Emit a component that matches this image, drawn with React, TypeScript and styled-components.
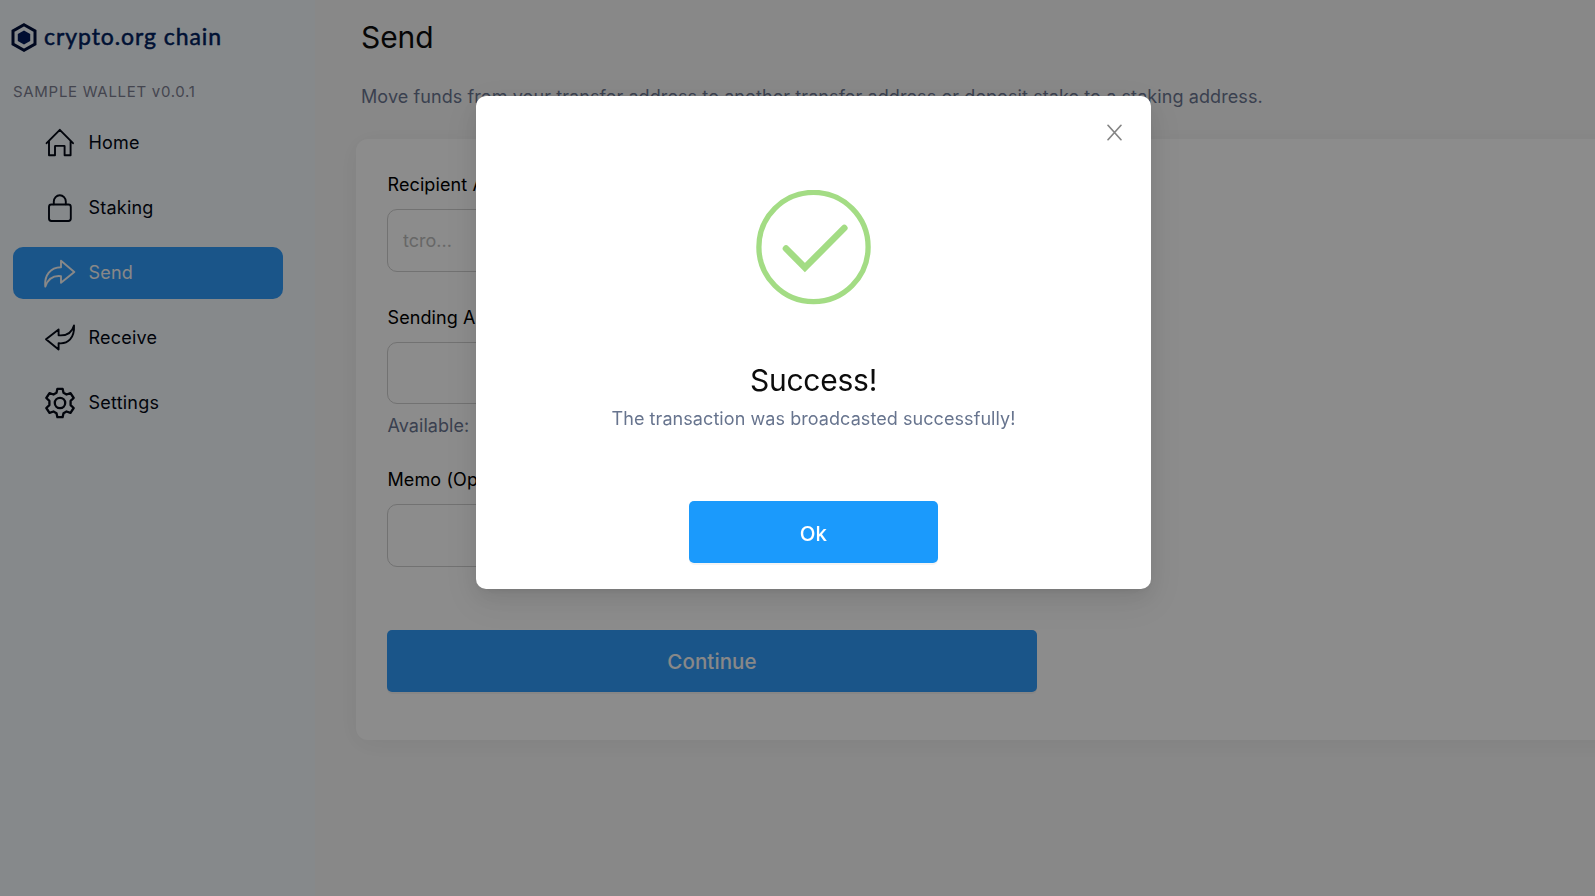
import React from 'react';
import styled, { createGlobalStyle } from 'styled-components';

const GlobalStyle = createGlobalStyle`
  * { box-sizing: border-box; }
  body {
    margin: 0;
    overflow: hidden;
    background: #f8f8f8;
    font-family: Inter, "Liberation Sans", sans-serif;
  }
  button, input { font-family: inherit; }
`;

const Layout = styled.div`
  display: flex;
  width: 100vw;
  height: 100vh;
  overflow: hidden;
`;

const Sidebar = styled.aside`
  flex: 0 0 315px;
  background: #f4f9fd;
`;

const Logo = styled.div`
  display: flex;
  align-items: center;
  gap: 7px;
  height: 74px;
  padding-left: 11px;
  color: #00225f;
`;

const LogoText = styled.span`
  font: 400 23px/30px Lato, "Open Sans", sans-serif;
  letter-spacing: 0.92px;
  padding-bottom: 2px;
  -webkit-text-stroke: 0.5px currentColor;
  white-space: nowrap;
`;

const Version = styled.div`
  padding-left: 13px;
  font-size: 15px;
  line-height: 36px;
  letter-spacing: 0.7px;
  color: #7d7f91;
`;

const Menu = styled.nav`
  display: flex;
  flex-direction: column;
  gap: 13px;
  padding: 7px 32px 0 13px;
`;

const MenuItem = styled.a<{ $active?: boolean }>`
  display: flex;
  align-items: center;
  gap: 12.5px;
  height: 52px;
  padding-left: 31px;
  border-radius: 10px;
  font-size: 18px;
  letter-spacing: 0.22px;
  color: ${(p) => (p.$active ? '#f7f7f7' : '#020814')};
  background: ${(p) => (p.$active ? '#319bf9' : 'transparent')};
`;

const MenuLabel = styled.span`
  padding-bottom: 1px;
`;

const Main = styled.main`
  flex: 1 0 auto;
  width: 1320px;
`;

const Title = styled.h1`
  margin: 0;
  padding-left: 46px;
  font-size: 30px;
  font-weight: 400;
  line-height: 75px;
  letter-spacing: -0.1px;
  color: #0c0c0c;
`;

const Description = styled.p`
  margin: 0 0 21px;
  padding-left: 46px;
  font-size: 18px;
  line-height: 43px;
  letter-spacing: 0.09px;
  color: #6b7691;
`;

const Card = styled.section`
  margin-left: 41px;
  padding: 32px 31px 48px;
  border-radius: 12px;
  background: #fff;
  box-shadow: 0 4px 26px rgba(0, 0, 0, 0.05);
`;

const Form = styled.form`
  display: flex;
  flex-direction: column;
  width: 650px;
`;

const Field = styled.div<{ $gap: number }>`
  display: flex;
  flex-direction: column;
  margin-bottom: ${(p) => p.$gap}px;
`;

const Label = styled.label`
  margin-bottom: 10px;
  padding-left: 0.5px;
  font-size: 18px;
  line-height: 28px;
  letter-spacing: 0.1px;
  color: #000;
`;

const Input = styled.input`
  height: 62.5px;
  padding: 0 15px;
  border: 1px solid #cfcfcf;
  border-radius: 10px;
  background: #fff;
  font-size: 18px;
  outline: none;
  &::placeholder { color: #bcbcbc; }
`;

const Hint = styled.div`
  margin-top: 7.5px;
  padding-left: 0.5px;
  font-size: 18px;
  line-height: 28px;
  letter-spacing: 0.05px;
  color: #6b7691;
`;

const Button = styled.button<{ $muted?: boolean }>`
  height: 62px;
  padding: 2px 0 0;
  border: 0;
  border-radius: 5px;
  font-size: 20.5px;
  font-weight: 500;
  letter-spacing: 0.1px;
  color: ${(p) => (p.$muted ? '#f7f7f7' : '#fff')};
  background: ${(p) => (p.$muted ? '#319bf9' : '#1b9afc')};
  box-shadow: 0 2px 0 rgba(0, 0, 0, 0.045);
`;

const Mask = styled.div`
  position: fixed;
  inset: 0;
  display: flex;
  justify-content: center;
  align-items: flex-start;
  padding: 96px 0 0 32px;
  background: rgba(0, 0, 0, 0.45);
`;

const Modal = styled.div`
  position: relative;
  display: flex;
  flex-direction: column;
  align-items: center;
  width: 675px;
  height: 493px;
  padding-top: 94px;
  border-radius: 10px;
  background: #fff;
  box-shadow: 0 4px 8px -5px rgba(0, 0, 0, 0.12), 0 8px 21px rgba(0, 0, 0, 0.08),
    0 12px 36px 10px rgba(0, 0, 0, 0.05);
`;

const Close = styled.span`
  position: absolute;
  top: 28px;
  right: 28px;
  display: flex;
`;

const ModalTitle = styled.h2`
  margin: 55px 0 0;
  font-size: 30px;
  font-weight: 400;
  line-height: 40px;
  letter-spacing: -0.25px;
  color: #0c0c0c;
`;

const ModalText = styled.p`
  margin: 5px 0 68px;
  font-size: 18px;
  line-height: 28px;
  letter-spacing: 0.07px;
  color: #67748e;
`;

const OkButton = styled(Button)`
  width: 249px;
`;

const Icon = ({ children }: { children: React.ReactNode }) => (
  <svg width="32" height="32" viewBox="0 0 32 32" fill="none" stroke="currentColor" strokeWidth="1.9" strokeLinejoin="round" strokeLinecap="round">
    {children}
  </svg>
);

const HomeIcon = () => (
  <Icon>
    <path d="M2.6 16.2 15.8 2.8 29 16.2M5 14.2V28.3H11V19.2Q11 18.9 11.3 18.9H20.3Q20.6 18.9 20.6 19.2V28.3H26.6V14.2" />
  </Icon>
);
const LockIcon = () => (
  <Icon>
    <rect x="5" y="12.5" width="21.8" height="16.500" rx="2.4" />
    <path d="M9.8 12.3V9.5a6 6.3 0 0 1 12 0v2.8" />
  </Icon>
);
const SendIcon = () => (
  <Icon>
    <path d="M17 3.8 30.3 15 17 25.8V19.2C10 18.4 4.3 21.2 1.3 29.6C.2 19 6 10.2 17 10.2Z" />
  </Icon>
);
const ReceiveIcon = () => (
  <Icon>
    <path d="M14.6 7.4 2 17.2 14.6 27.5V21.2C24 22.3 30.7 16 30 3.4C28 10.7 22.5 13.9 14.6 13.3Z" />
  </Icon>
);
const GearIcon = () => (
  <svg width="32" height="32" viewBox="0 0 32 32" fill="none" stroke="currentColor" strokeWidth="2.3" strokeLinejoin="round">
    <path d="M13.400 1.800h5.200l.9 4 3 1.700 4-1.400 3.200 4.900-3.100 2.900v4.200l3.100 2.900-3.200 4.900-4-1.400-3 1.700-.9 4h-5.200l-.9-4-3-1.700-4 1.400L2.300 21l3.100-2.900v-4.200L2.300 11l3.200-4.900 4 1.400 3-1.700z" />
    <circle cx="16" cy="16" r="5.2" />
  </svg>
);

const menu = [
  { label: 'Home', icon: <HomeIcon /> },
  { label: 'Staking', icon: <LockIcon /> },
  { label: 'Send', icon: <SendIcon />, active: true },
  { label: 'Receive', icon: <ReceiveIcon /> },
  { label: 'Settings', icon: <GearIcon /> },
];

export default function App() {
  return (
    <>
      <GlobalStyle />
      <Layout>
        <Sidebar>
          <Logo>
            <svg width="26" height="29" viewBox="0 0 26 29">
              <path d="M13 1.800 24 8V21L13 27.200 2 21V8Z" fill="none" stroke="#000f3a" strokeWidth="3" />
              <path d="M13 7.500 19.200 11V18L13 21.500 6.800 18V11Z" fill="#00195a" />
            </svg>
            <LogoText>crypto.org chain</LogoText>
          </Logo>
          <Version>SAMPLE WALLET v0.0.1</Version>
          <Menu>
            {menu.map((m) => (
              <MenuItem key={m.label} $active={m.active}>
                {m.icon}
                <MenuLabel>{m.label}</MenuLabel>
              </MenuItem>
            ))}
          </Menu>
        </Sidebar>
        <Main>
          <Title>Send</Title>
          <Description>
            Move funds from your transfer address to another transfer address or deposit stake to a staking address.
          </Description>
          <Card>
            <Form>
              <Field $gap={32}>
                <Label>Recipient Address</Label>
                <Input placeholder="tcro..." />
              </Field>
              <Field $gap={26.5}>
                <Label>Sending Amount</Label>
                <Input />
                <Hint>Available:</Hint>
              </Field>
              <Field $gap={63}>
                <Label>Memo (Optional)</Label>
                <Input />
              </Field>
              <Button type="button" $muted>Continue</Button>
            </Form>
          </Card>
        </Main>
      </Layout>
      <Mask>
        <Modal>
          <Close>
            <svg width="17" height="17" viewBox="0 0 17 17" stroke="#858585" strokeWidth="1.7" strokeLinecap="round">
              <path d="M2 1.300 15 15.700M15 1.300 2 15.700" />
            </svg>
          </Close>
          <svg width="115" height="115" viewBox="0 0 115 115" fill="none" stroke="#a3dc84">
            <circle cx="57.500" cy="57" r="54.600" strokeWidth="5.300" />
            <path d="M30 58.500 48.900 77.600 88.300 38" strokeWidth="6.600" strokeLinecap="round" />
          </svg>
          <ModalTitle>Success!</ModalTitle>
          <ModalText>The transaction was broadcasted successfully!</ModalText>
          <OkButton>Ok</OkButton>
        </Modal>
      </Mask>
    </>
  );
}
